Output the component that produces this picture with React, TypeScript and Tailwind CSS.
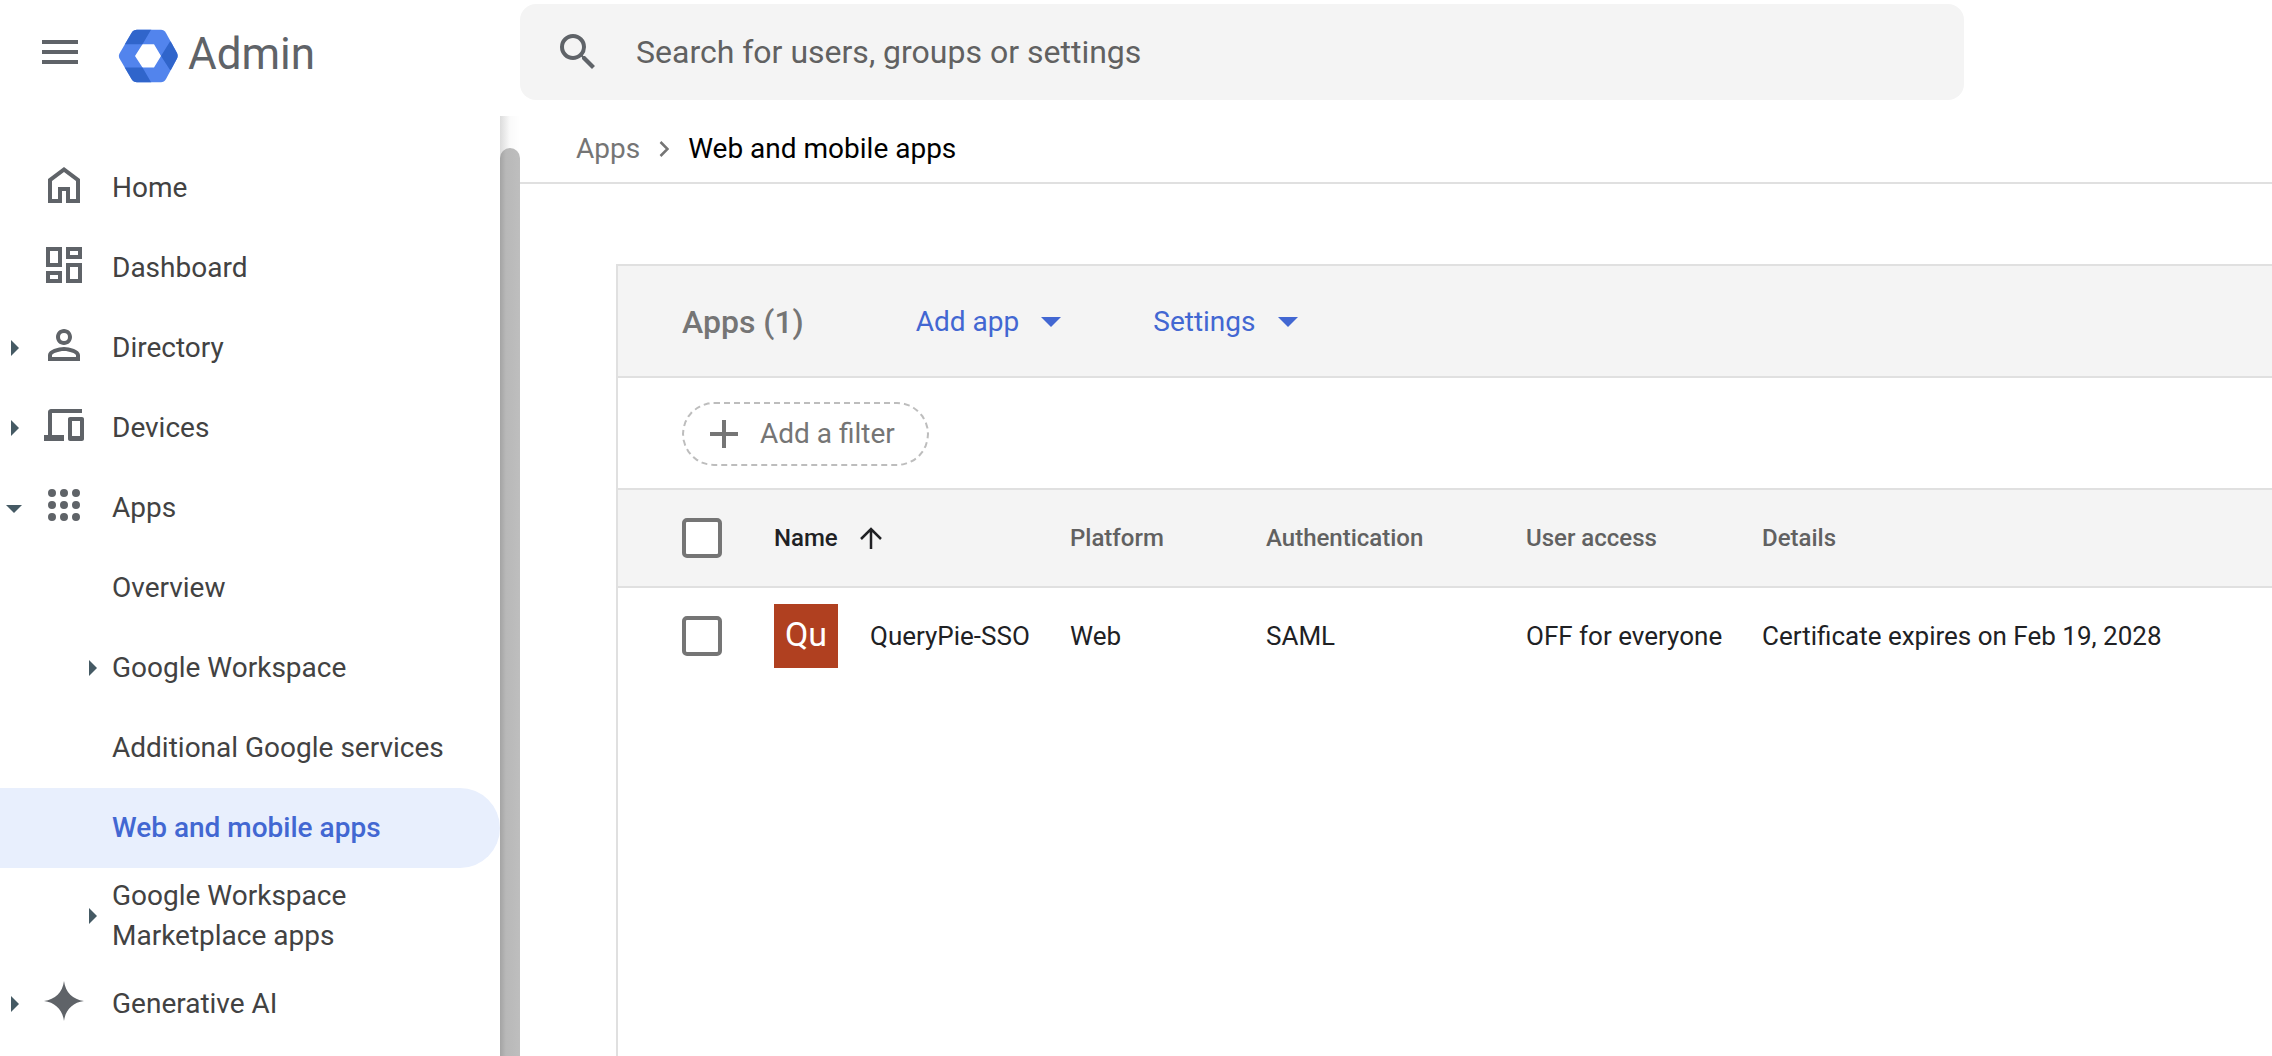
import React from "react";

type NavItem = {
  label: string;
  icon?: string;
  arrow?: "right" | "down";
  nested?: boolean;
  active?: boolean;
};

// 24x24 icon outlines
const icons = {
  menu: "M3 18h18v-2H3v2zm0-5h18v-2H3v2zm0-7v2h18V6H3z",
  search:
    "M15.5 14h-.79l-.28-.27A6.471 6.471 0 0 0 16 9.5 6.5 6.5 0 1 0 9.5 16c1.61 0 3.09-.59 4.23-1.57l.27.28v.79l5 4.99L20.49 19l-4.99-5zm-6 0C7.01 14 5 11.99 5 9.5S7.01 5 9.5 5 14 7.01 14 9.5 11.99 14 9.5 14z",
  home: "M12 3L4 9v12h7v-6h2v6h7V9l-8-6zm6 16h-3v-6H9v6H6v-9l6-4.5 6 4.5v9z",
  dashboard:
    "M9 5v6H5V5h4m10 0v2h-4V5h4m0 8v6h-4v-6h4M9 17v2H5v-2h4M11 3H3v10h8V3zm10 0h-8v6h8V3zm0 8h-8v10h8V11zm-10 4H3v6h8v-6z",
  person:
    "M12 6a2 2 0 1 1 0 4 2 2 0 0 1 0-4m0 9c2.7 0 5.8 1.29 6 2v1H6v-.99c.2-.72 3.3-2.01 6-2.01m0-11C9.79 4 8 5.79 8 8s1.79 4 4 4 4-1.79 4-4-1.79-4-4-4zm0 9c-2.67 0-8 1.34-8 4v3h16v-3c0-2.66-5.33-4-8-4z",
  devices:
    "M6 6h15V4H5.5C4.67 4 4 4.67 4 5.5V17H2v3h10v-3H6V6zm15 2h-6c-.55 0-1 .45-1 1v10c0 .55.45 1 1 1h6c.55 0 1-.45 1-1V9c0-.55-.45-1-1-1zm-1 9.500h-4V10h4v7.500z",
  apps: "M6 8a2 2 0 1 0 0-4 2 2 0 0 0 0 4zm6 0a2 2 0 1 0 0-4 2 2 0 0 0 0 4zm6 0a2 2 0 1 0 0-4 2 2 0 0 0 0 4zM6 14a2 2 0 1 0 0-4 2 2 0 0 0 0 4zm6 0a2 2 0 1 0 0-4 2 2 0 0 0 0 4zm6 0a2 2 0 1 0 0-4 2 2 0 0 0 0 4zM6 20a2 2 0 1 0 0-4 2 2 0 0 0 0 4zm6 0a2 2 0 1 0 0-4 2 2 0 0 0 0 4zm6 0a2 2 0 1 0 0-4 2 2 0 0 0 0 4z",
  spark: "M12 2c.7 5.6 4.4 9.3 10 10-5.6.7-9.3 4.4-10 10-.7-5.6-4.4-9.3-10-10 5.6-.7 9.3-4.4 10-10z",
};

function Icon({ d }: { d: string }) {
  return (
    <svg className="size-12 shrink-0 fill-[#5f6368]" viewBox="0 0 24 24" aria-hidden="true">
      <path d={d} />
    </svg>
  );
}

function Logo() {
  return (
    <svg width="60" height="54" viewBox="0 0 60 54" aria-hidden="true">
      <clipPath id="hex">
        <path d="M19 .7H43Q46 .7 48 4L59 24Q60.3 27 59 29.5L48 50Q46 53.3 43 53.3H19Q15.5 53.3 13.5 50L1.5 29.5Q.2 27 1.5 24.5L13.5 4Q15.5 .7 19 .7Z" />
      </clipPath>
      <g clipPath="url(#hex)">
        <path fill="#5284ed" fillRule="evenodd" d="M0 0H60V54H0ZM17 27L24.5 38.5H36L43 27L36 15.3H24.5Z" />
        <path fill="#3065cb" d="M0 0H33.5L24.5 15.3H0ZM0 38.5H24.5L33.5 54H0ZM43 27L52 12.5H60V41H52Z" />
      </g>
    </svg>
  );
}

function Arrow({ dir }: { dir: "right" | "down" }) {
  return (
    <svg className="size-4 fill-[#455a64]" viewBox="0 0 16 16" aria-hidden="true">
      <path d={dir === "right" ? "M5 0L13 8L5 16Z" : "M0 5H16L8 13Z"} />
    </svg>
  );
}

const navItems: NavItem[] = [
  { label: "Home", icon: icons.home },
  { label: "Dashboard", icon: icons.dashboard },
  { label: "Directory", icon: icons.person, arrow: "right" },
  { label: "Devices", icon: icons.devices, arrow: "right" },
  { label: "Apps", icon: icons.apps, arrow: "down" },
  { label: "Overview", nested: true },
  { label: "Google Workspace", nested: true, arrow: "right" },
  { label: "Additional Google services", nested: true },
  { label: "Web and mobile apps", nested: true, active: true },
  { label: "Google Workspace Marketplace apps", nested: true, arrow: "right" },
  { label: "Generative AI", icon: icons.spark, arrow: "right" },
];

function NavRow({ item }: { item: NavItem }) {
  return (
    <a
      href="#"
      className={
        item.active
          ? "flex min-h-20 items-center rounded-r-full bg-[#e8effd] py-2 font-medium text-[#4267d2]"
          : "flex min-h-20 items-center py-2 text-[#424242]"
      }
    >
      {item.nested ? (
        <span className="flex w-28 shrink-0 justify-end pr-3">
          {item.arrow && <Arrow dir={item.arrow} />}
        </span>
      ) : (
        <span className="flex w-28 shrink-0 items-center">
          <span className="flex w-10 pl-1.5">{item.arrow && <Arrow dir={item.arrow} />}</span>
          <span className="pb-1.5">{item.icon && <Icon d={item.icon} />}</span>
        </span>
      )}
      <span className="pr-12 text-[28px] leading-10">{item.label}</span>
    </a>
  );
}

function MenuButton({ label }: { label: string }) {
  return (
    <button type="button" className="flex items-center gap-[22px] text-[28px] leading-10 text-[#4267d2]">
      {label}
      <svg width="20" height="10" viewBox="0 0 20 10" fill="currentColor" aria-hidden="true">
        <path d="M0 0H20L10 10Z" />
      </svg>
    </button>
  );
}

function Checkbox({ label }: { label: string }) {
  return (
    <input
      type="checkbox"
      aria-label={label}
      className="block size-10 appearance-none rounded-[5px] border-4 border-[#757575] bg-white checked:bg-[#757575]"
    />
  );
}

const rows = [
  {
    name: "QueryPie-SSO",
    initials: "Qu",
    platform: "Web",
    auth: "SAML",
    access: "OFF for everyone",
    details: "Certificate expires on Feb 19, 2028",
  },
];

export default function App() {
  return (
    <div className="flex h-screen flex-col overflow-hidden bg-white font-['Roboto',sans-serif]">
      <header className="flex h-[116px] shrink-0">
        <div className="flex h-[104px] w-[520px] shrink-0 items-center pl-9">
          <button type="button" aria-label="Main menu" className="mr-[34px]">
            <Icon d={icons.menu} />
          </button>
          <a href="#" className="flex items-center gap-2.5 pt-1 text-[44px] leading-[52px] text-[#5f6368]">
            <span className="pt-1">
              <Logo />
            </span>
            Admin
          </a>
        </div>
        <label className="mt-1 flex h-24 max-w-[1444px] flex-1 items-center gap-[34px] rounded-2xl bg-[#f4f4f4] pl-[34px]">
          <Icon d={icons.search} />
          <input
            type="search"
            aria-label="Search"
            placeholder="Search for users, groups or settings"
            className="h-12 flex-1 bg-transparent text-[32px] outline-none placeholder:text-[#616161]"
          />
        </label>
      </header>

      <div className="flex min-h-0 flex-1">
        <nav className="w-[500px] shrink-0 overflow-hidden pt-8">
          {navItems.map((item) => (
            <NavRow key={item.label} item={item} />
          ))}
        </nav>
        <div className="flex w-5 shrink-0 flex-col bg-linear-to-r from-[#dcdcdc] via-[#fafafa] to-white pt-8">
          <div className="flex-1 rounded-t-full bg-linear-to-r from-[#a4a4a4] via-[#b8b8b8] via-30% to-[#bebebe]" />
        </div>

        <main className="flex min-w-0 flex-1 flex-col">
          <div className="flex h-[68px] shrink-0 items-center gap-[19px] border-b-2 border-[#e0e0e0] pl-14 text-[28px] leading-10">
            <a href="#" className="text-[#757575]">
              Apps
            </a>
            <svg width="10" height="16" viewBox="0 0 10 16" fill="none" stroke="#757575" strokeWidth="2.5" aria-hidden="true">
              <path d="M1.5 1L8.5 8L1.5 15" />
            </svg>
            <span className="text-black">Web and mobile apps</span>
          </div>

          <section className="mt-20 ml-24 flex-1 border-t-2 border-l-2 border-[#e0e0e0]">
            <div className="flex h-28 items-center border-b-2 border-[#e0e0e0] bg-[#f4f4f4] pt-0.5 pl-16">
              <h1 className="mr-28 text-[32px] leading-10 font-medium text-[#757575]">Apps (1)</h1>
              <div className="flex gap-[92px]">
                <MenuButton label="Add app" />
                <MenuButton label="Settings" />
              </div>
            </div>
            <div className="flex h-28 items-center border-b-2 border-[#e0e0e0] pt-0.5 pl-16">
              <button
                type="button"
                className="flex h-16 items-center gap-[22px] rounded-full border-2 border-dashed border-[#bdbdbd] pr-8 pl-[26px] text-[28px] leading-10 text-[#757575]"
              >
                <svg width="28" height="28" viewBox="0 0 28 28" fill="currentColor" aria-hidden="true">
                  <path d="M12 0H16V12H28V16H16V28H12V16H0V12H12Z" />
                </svg>
                Add a filter
              </button>
            </div>

            <table className="w-full table-fixed border-separate border-spacing-0 text-left text-[26px] text-[#202124]">
              <colgroup>
                <col className="w-[156px]" />
                <col className="w-[296px]" />
                <col className="w-[196px]" />
                <col className="w-[260px]" />
                <col className="w-[236px]" />
                <col />
              </colgroup>
              <thead className="bg-[#f4f4f4] text-2xl text-[#616161]">
                <tr className="h-[98px] *:border-b-2 *:border-[#e0e0e0] *:font-medium">
                  <th className="pl-16">
                    <Checkbox label="Select all apps" />
                  </th>
                  <th className="text-[#202124]" aria-sort="ascending">
                    <button type="button" className="flex items-center gap-[22px]">
                      Name
                      <svg width="22" height="22" viewBox="0 0 22 22" fill="none" stroke="currentColor" strokeWidth="2.5" aria-hidden="true">
                        <path d="M11 22V2M1 12L11 2L21 12" />
                      </svg>
                    </button>
                  </th>
                  <th>Platform</th>
                  <th>Authentication</th>
                  <th>User access</th>
                  <th>Details</th>
                </tr>
              </thead>
              <tbody>
                {rows.map((row) => (
                  <tr key={row.name} className="h-24">
                    <td className="pl-16">
                      <Checkbox label={`Select ${row.name}`} />
                    </td>
                    <td>
                      <div className="flex items-center gap-8">
                        <span className="flex size-16 items-center justify-center bg-[#b04020] pb-1 text-[34px] text-white">
                          {row.initials}
                        </span>
                        {row.name}
                      </div>
                    </td>
                    <td>{row.platform}</td>
                    <td>{row.auth}</td>
                    <td>{row.access}</td>
                    <td>{row.details}</td>
                  </tr>
                ))}
              </tbody>
            </table>
          </section>
        </main>
      </div>
    </div>
  );
}
